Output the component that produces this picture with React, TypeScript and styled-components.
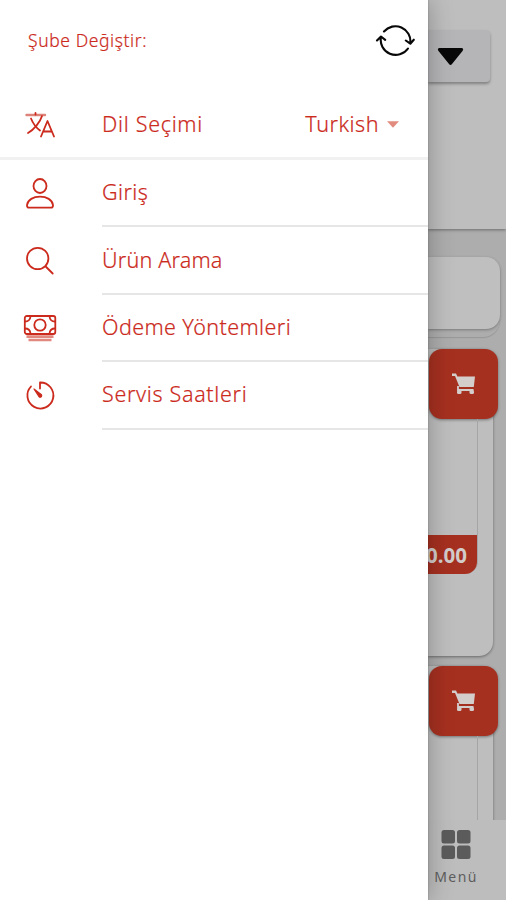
import React from "react";
import styled, { createGlobalStyle } from "styled-components";

const Global = createGlobalStyle`
  * { box-sizing: border-box; }
  body { margin: 0; background: #adadad; font-family: "Noto Sans", "Open Sans", sans-serif; }
`;

const Screen = styled.div`
  display: grid;
  grid-template-columns: 428px 78px;
  width: 506px;
  height: 900px;
  overflow: hidden;
`;

const Drawer = styled.aside`
  z-index: 2;
  background: #fff;
  color: #cb2a1c;
  box-shadow: 0 0 24px rgba(0, 0, 0, 0.28), 0 0 2px rgba(0, 0, 0, 0.25);
`;

const BranchBar = styled.header`
  display: flex;
  align-items: center;
  justify-content: space-between;
  height: 80px;
  padding: 0 13px 0 28px;
`;

const Label = styled.span<{ $size?: number; $spacing?: number }>`
  font-size: ${(p) => p.$size ?? 21.5}px;
  line-height: 30px;
  letter-spacing: ${(p) => p.$spacing ?? 0}px;
  font-weight: 300;
  white-space: nowrap;
  -webkit-text-stroke: 0.2px currentColor;
`;

const LanguageRow = styled.div`
  display: flex;
  height: 80px;
  padding-top: 10px;
  padding-left: 20px;
  padding-right: 29px;
  align-items: center;
  border-bottom: 3px solid #f1f1f1;
`;

const IconSlot = styled.span`
  display: flex;
  flex: 0 0 40px;
  height: 40px;
  margin-right: 42px;
`;

const LanguageValue = styled.span`
  display: flex;
  align-items: center;
  gap: 8px;
  margin-left: auto;
`;

const MenuRow = styled.div`
  display: flex;
  height: 67.4px;
  padding-left: 20px;
  align-items: center;
`;

const MenuText = styled.div`
  display: flex;
  flex: 1;
  height: 100%;
  align-items: center;
  padding-bottom: 1px;
  border-bottom: 2px solid #e6e6e6;
`;

const Page = styled.main`
  display: flex;
  flex-direction: column;
  height: 900px;
  background: #adadad;
`;

const PageHeader = styled.header`
  flex: 0 0 229px;
  padding-top: 30px;
  background: #bebebe;
  box-shadow: 0 1px 3px rgba(0, 0, 0, 0.38);
`;

const Dropdown = styled.div`
  width: 62px;
  height: 52px;
  padding: 17px 0 0 9px;
  border-radius: 0 4px 4px 0;
  background: #b5b5b7;
  box-shadow: 0 2px 3px rgba(0, 0, 0, 0.32);
`;

const SearchWrap = styled.div`
  flex: 0 0 80px;
  width: 72px;
  margin-top: 28px;
  border-radius: 0 14px 17px 0;
  box-shadow: 0 1px 1px rgba(0, 0, 0, 0.13);
`;

const SearchBox = styled.div`
  height: 72px;
  border-radius: 0 14px 14px 0;
  background: #bfbfbf;
  box-shadow: 0 1px 3px rgba(0, 0, 0, 0.3);
`;

const Products = styled.section`
  flex: 1;
  min-height: 0;
  padding-top: 12px;
  overflow: hidden;
`;

const Product = styled.article`
  width: 65px;
  height: 307px;
  margin-bottom: 10px;
  border-radius: 0 14px 14px 0;
  background: #bebebe;
  box-shadow: 0 1px 3px rgba(0, 0, 0, 0.4);
`;

const CartButton = styled.div`
  display: flex;
  align-items: center;
  justify-content: center;
  width: 69px;
  height: 70px;
  margin-left: 1px;
  border-radius: 13px;
  background: #a63020;
  box-shadow: 0 1px 3px rgba(0, 0, 0, 0.4);
`;

const ProductBody = styled.div`
  display: flex;
  align-items: flex-end;
  width: 50px;
  height: 155px;
  border-right: 1px solid #a5a5a5;
  border-radius: 0 0 13px 0;
`;

const LowerBody = styled(ProductBody)`
  border-radius: 0;
`;

const Price = styled.div`
  display: flex;
  align-items: center;
  justify-content: flex-end;
  width: 49px;
  height: 39px;
  padding-right: 10px;
  border-radius: 0 0 12px 0;
  background: #a63020;
  color: #d2cccb;
  font-size: 20.5px;
  font-weight: 700;
  overflow: hidden;
`;

const BottomNav = styled.nav`
  z-index: 1;
  display: flex;
  flex: 0 0 80px;
  flex-direction: column;
  align-items: center;
  padding: 9px 22px 0 0;
  background: #bdbdbd;
  color: #5e5e5e;
  font-size: 14px;
  line-height: 22px;
  letter-spacing: 1.4px;

  span { margin-top: 6px; }
`;

const Stroke = styled.svg`
  display: block;
  fill: none;
  stroke: currentColor;
  stroke-width: 1.8;
  stroke-linecap: round;
  stroke-linejoin: round;
`;

const Solid = styled.svg`
  display: block;
  fill: currentColor;
`;

const Black = styled.span`
  color: #080808;
`;

const Caret = styled.span`
  padding-top: 2px;
  color: #e28c80;
`;

const icons: Record<string, React.ReactNode> = {
  language: (
    <>
      <path d="M6.500 11H25" stroke="#dd8379" strokeWidth="2.400" />
      <path d="M15.500 9v1.500M22 12C20 18.500 14 25.500 8 29M11 14.500c2 5 5 9 9 12" />
      <path d="m21 32.500 6.500-15.500L34 32.500M23.200 27.500h8.600" />
    </>
  ),
  user: (
    <>
      <ellipse cx="20" cy="12" rx="6.500" ry="7" />
      <path d="M9 33.700h22c1.700 0 2-1 2-2.500-.7-5.500-6.300-8.500-13-8.500s-12.300 3-13 8.500c0 1.500.3 2.500 2 2.500Z" />
    </>
  ),
  search: (
    <>
      <circle cx="17.700" cy="17.500" r="10.700" />
      <path d="m25.700 25.500 7 7" />
    </>
  ),
  cash: (
    <>
      <rect x="4.800" y="8" width="30.500" height="18" rx="2" />
      <circle cx="20" cy="17" r="5.700" />
      <path d="M5 13.500q5 0 5.500-5M35 13.500q-5 0-5.500-5M5 20.500q5 0 5.500 5M35 20.500q-5 0-5.500 5" />
      <path d="M6.500 28.700h27M8.500 32h23" stroke="#e1887f" strokeWidth="2.700" strokeLinecap="butt" />
    </>
  ),
  timer: (
    <>
      <path d="M20 12.500V6.500a13 13 0 1 1-9 4" />
      <path d="m14 13 7.500 5.700a1.700 1.700 0 0 1-2.300 2.300Z" fill="currentColor" strokeWidth="1.200" />
    </>
  ),
};

const Icon = ({ name }: { name: string }) => (
  <IconSlot>
    <Stroke width="40" height="40" viewBox="0 0 40 40">{icons[name]}</Stroke>
  </IconSlot>
);

const CartIcon = () => (
  <Solid width="26" height="24" viewBox="0 0 26 24" color="#d3cdcc">
    <path d="M1 1.500h4l1.400 3H24L22.800 15H8.500L4 4H1Z" />
    <path d="M7 14v4h15.500" fill="none" stroke="currentColor" strokeWidth="1.800" />
    <rect x="6" y="18" width="4.500" height="4" rx="1.500" />
    <rect x="18.500" y="18" width="4.500" height="4" rx="1.500" />
  </Solid>
);

const menu = [
  { icon: "user", text: "Giriş", spacing: 0.4 },
  { icon: "search", text: "Ürün Arama", spacing: 0.2 },
  { icon: "cash", text: "Ödeme Yöntemleri", spacing: 0.4 },
  { icon: "timer", text: "Servis Saatleri", spacing: 0.67 },
];

export default function App() {
  return (
    <Screen>
      <Global />
      <Drawer>
        <BranchBar>
          <Label $size={17.5} $spacing={0.6}>Şube Değiştir:</Label>
          <Black>
            <Stroke width="40" height="40" viewBox="0 0 40 40">
              <path d="M9 11.500A15 15 0 0 1 35.300 23M30.800 20.500l4.500 3.200 3.500-4M33 28.500A15 15 0 0 1 6 17M2 20.500l4-4 4.200 3.300" strokeWidth="2.100" />
            </Stroke>
          </Black>
        </BranchBar>
        <LanguageRow>
          <Icon name="language" />
          <Label $spacing={0.7}>Dil Seçimi</Label>
          <LanguageValue>
            <Label $spacing={0.5}>Turkish</Label>
            <Caret>
              <Solid width="12" height="7" viewBox="0 0 13 7"><path d="M0 0h13L6.500 7Z" /></Solid>
            </Caret>
          </LanguageValue>
        </LanguageRow>
        {menu.map((item) => (
          <MenuRow key={item.icon}>
            <Icon name={item.icon} />
            <MenuText><Label $spacing={item.spacing}>{item.text}</Label></MenuText>
          </MenuRow>
        ))}
      </Drawer>
      <Page>
        <PageHeader>
          <Dropdown>
            <Black>
              <Solid width="27" height="19" viewBox="0 0 27 19">
                <path d="M2 1h23q2 1 .5 3L15 17q-1.500 2-3 0L1.500 4Q0 2 2 1Z" />
              </Solid>
            </Black>
          </Dropdown>
        </PageHeader>
        <SearchWrap><SearchBox /></SearchWrap>
        <Products>
          <Product>
            <CartButton><CartIcon /></CartButton>
            <ProductBody><Price>0.00</Price></ProductBody>
          </Product>
          <Product>
            <CartButton><CartIcon /></CartButton>
            <LowerBody />
          </Product>
        </Products>
        <BottomNav>
          <Solid width="31" height="31" viewBox="0 0 31 31" color="#5b5b5b">
            <rect x="0.500" y="1" width="13.500" height="13.500" rx="2.500" />
            <rect x="16" y="1" width="13.500" height="13.500" rx="2.500" />
            <rect x="0.500" y="16.500" width="13.500" height="13.500" rx="2.500" />
            <rect x="16" y="16.500" width="13.500" height="13.500" rx="2.500" />
          </Solid>
          <span>Menü</span>
        </BottomNav>
      </Page>
    </Screen>
  );
}
